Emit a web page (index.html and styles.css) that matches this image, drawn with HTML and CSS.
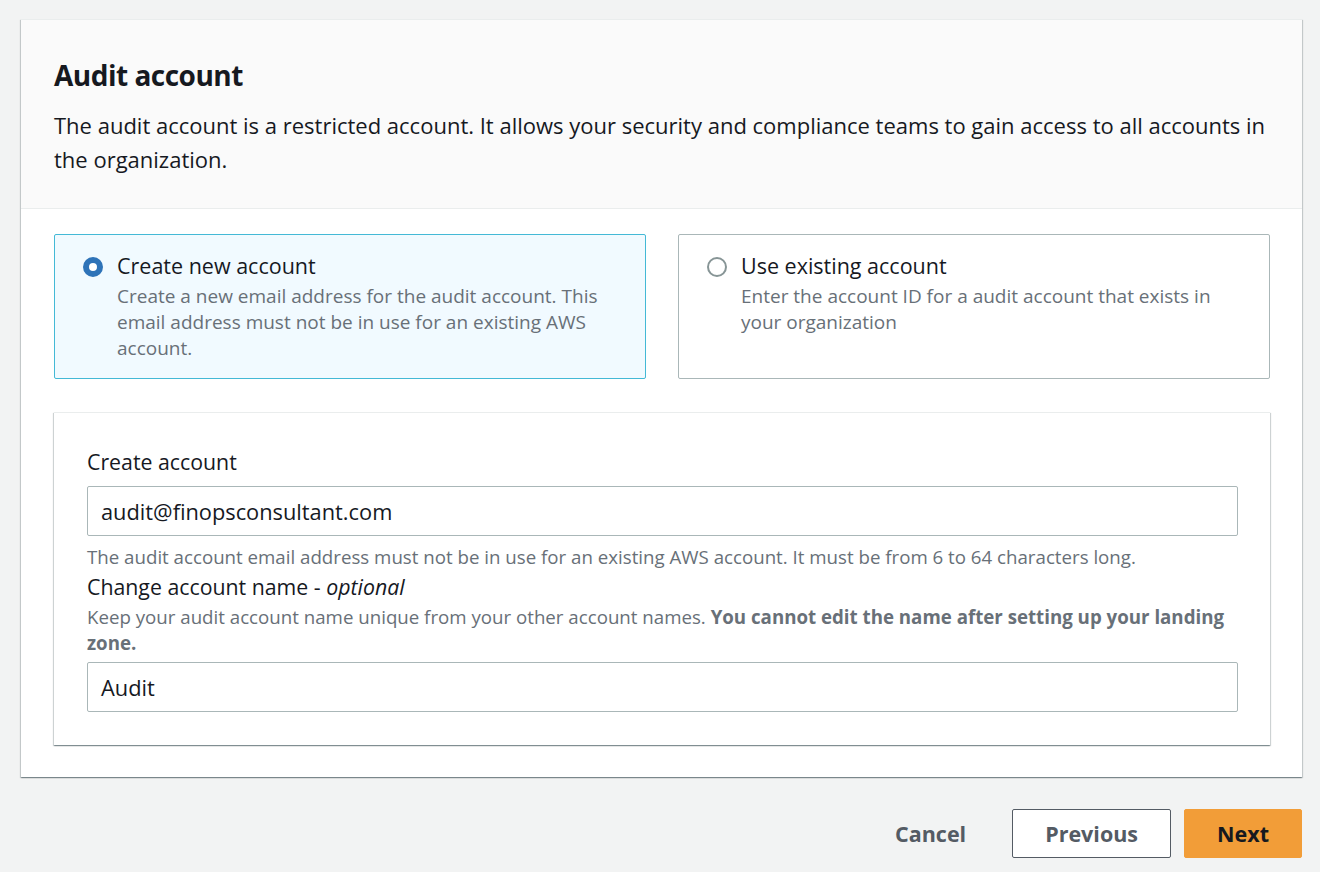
FILE: index.html
```html
<!DOCTYPE html>
<html lang="en">
<head>
<meta charset="utf-8">
<title>Audit account</title>
<link rel="stylesheet" href="styles.css">
</head>
<body>
<div class="page">
  <section class="card">
    <header class="card-header">
      <h2 class="title">Audit account</h2>
      <p class="desc">The audit account is a restricted account. It allows your security and compliance teams to gain access to all accounts in the organization.</p>
    </header>
    <div class="card-body">
      <div class="tiles">
        <label class="tile tile-selected">
          <span class="radio radio-on"></span>
          <span class="tile-text">
            <span class="tile-label">Create new account</span>
            <span class="tile-desc">Create a new email address for the audit account. This email address must not be in use for an existing AWS account.</span>
          </span>
        </label>
        <label class="tile">
          <span class="radio"></span>
          <span class="tile-text">
            <span class="tile-label">Use existing account</span>
            <span class="tile-desc">Enter the account ID for a audit account that exists in your organization</span>
          </span>
        </label>
      </div>
      <div class="panel">
        <div class="field-label">Create account</div>
        <div class="input">audit@finopsconsultant.com</div>
        <div class="hint">The audit account email address must not be in use for an existing AWS account. It must be from 6 to 64 characters long.</div>
        <div class="field-label label-2">Change account name - <i>optional</i></div>
        <div class="hint hint-desc">Keep your audit account name unique from your other account names. <b>You cannot edit the name after setting up your landing zone.</b></div>
        <div class="input input-2">Audit</div>
      </div>
    </div>
  </section>
  <div class="actions">
    <button class="btn btn-link">Cancel</button>
    <button class="btn btn-normal">Previous</button>
    <button class="btn btn-primary">Next</button>
  </div>
</div>
</body>
</html>
```

FILE: styles.css
```css
* { box-sizing: border-box; }
html, body { margin: 0; padding: 0; }
body {
  background: #f2f3f3;
  font-family: "Open Sans", "Noto Sans", sans-serif;
  color: #16191f;
  width: 1320px;
  height: 872px;
  overflow: hidden;
}
.page {
  padding: 19px 18px 0 21px;
}
.card {
  background: #fff;
  box-shadow: 0 1px 1px 0 rgba(0, 28, 36, 0.3), 1px 1px 1px 0 rgba(0, 28, 36, 0.15), -1px 1px 1px 0 rgba(0, 28, 36, 0.15);
  border-top: 1px solid #eaeded;
}
.card-header {
  background: #fafafa;
  border-bottom: 1px solid #eaeded;
  padding: 37px 33px 32px 33px;
}
.title {
  margin: 0;
  font-size: 28px;
  letter-spacing: -0.5px;
  line-height: 36px;
  font-weight: 700;
  color: #16191f;
}
.desc {
  margin: 15px 0 0 0;
  font-size: 22px;
  line-height: 34px;
  color: #16191f;
}
.card-body {
  padding: 25px 32px 32px 33px;
}
.tiles {
  display: grid;
  grid-template-columns: 1fr 1fr;
  gap: 32px;
}
.tile {
  display: flex;
  gap: 14px;
  height: 145px;
  padding: 18px 28px;
  border: 1px solid #aab7b8;
  border-radius: 2px;
  background: #fff;
}
.tile-selected {
  background: #f1faff;
  border-color: #44b9d6;
}
.radio {
  flex: none;
  width: 20px;
  height: 20px;
  margin-top: 4px;
  border-radius: 50%;
  border: 2px solid #879596;
  background: #fff;
}
.radio-on {
  border: 6px solid #2e73b8;
}
.tile-text {
  display: flex;
  flex-direction: column;
}
.tile-label {
  font-size: 21.5px;
  line-height: 26px;
  color: #16191f;
}
.tile-desc {
  margin-top: 4px;
  font-size: 19px;
  line-height: 26px;
  color: #687078;
}
.panel {
  margin-top: 33px;
  background: #fff;
  padding: 34px 32px 33px 33px;
  box-shadow: 0 1px 1px 0 rgba(0, 28, 36, 0.3), 1px 1px 1px 0 rgba(0, 28, 36, 0.15), -1px 1px 1px 0 rgba(0, 28, 36, 0.15);
  border-top: 1px solid #eaeded;
}
.field-label {
  font-size: 21.3px;
  line-height: 30px;
  color: #16191f;
}
.field-label i { font-style: italic; }
.input {
  margin-top: 9px;
  height: 50px;
  border: 1px solid #aab7b8;
  border-radius: 2px;
  padding: 0 13px;
  display: flex;
  align-items: center;
  font-size: 21.8px;
  color: #16191f;
  background: #fff;
}
.hint {
  margin-top: 8px;
  font-size: 18.7px;
  line-height: 26px;
  color: #687078;
}
.label-2 { margin-top: 2px; }
.hint-desc { margin-top: 2px; }
.hint-desc b { font-weight: 700; }
.input-2 { margin-top: 6px; }
.actions {
  display: flex;
  justify-content: flex-end;
  gap: 13px;
  margin-top: 32px;
}
.btn {
  height: 49px;
  padding: 0 32px;
  font-family: inherit;
  font-size: 21.5px;
  font-weight: 700;
  border-radius: 2px;
  border: 1px solid transparent;
  background: transparent;
  color: #545b64;
  cursor: pointer;
}
.btn-normal {
  background: #fff;
  border-color: #545b64;
}
.btn-primary {
  background: #f29d38;
  color: #16191f;
  border-color: #f29d38;
}
```
